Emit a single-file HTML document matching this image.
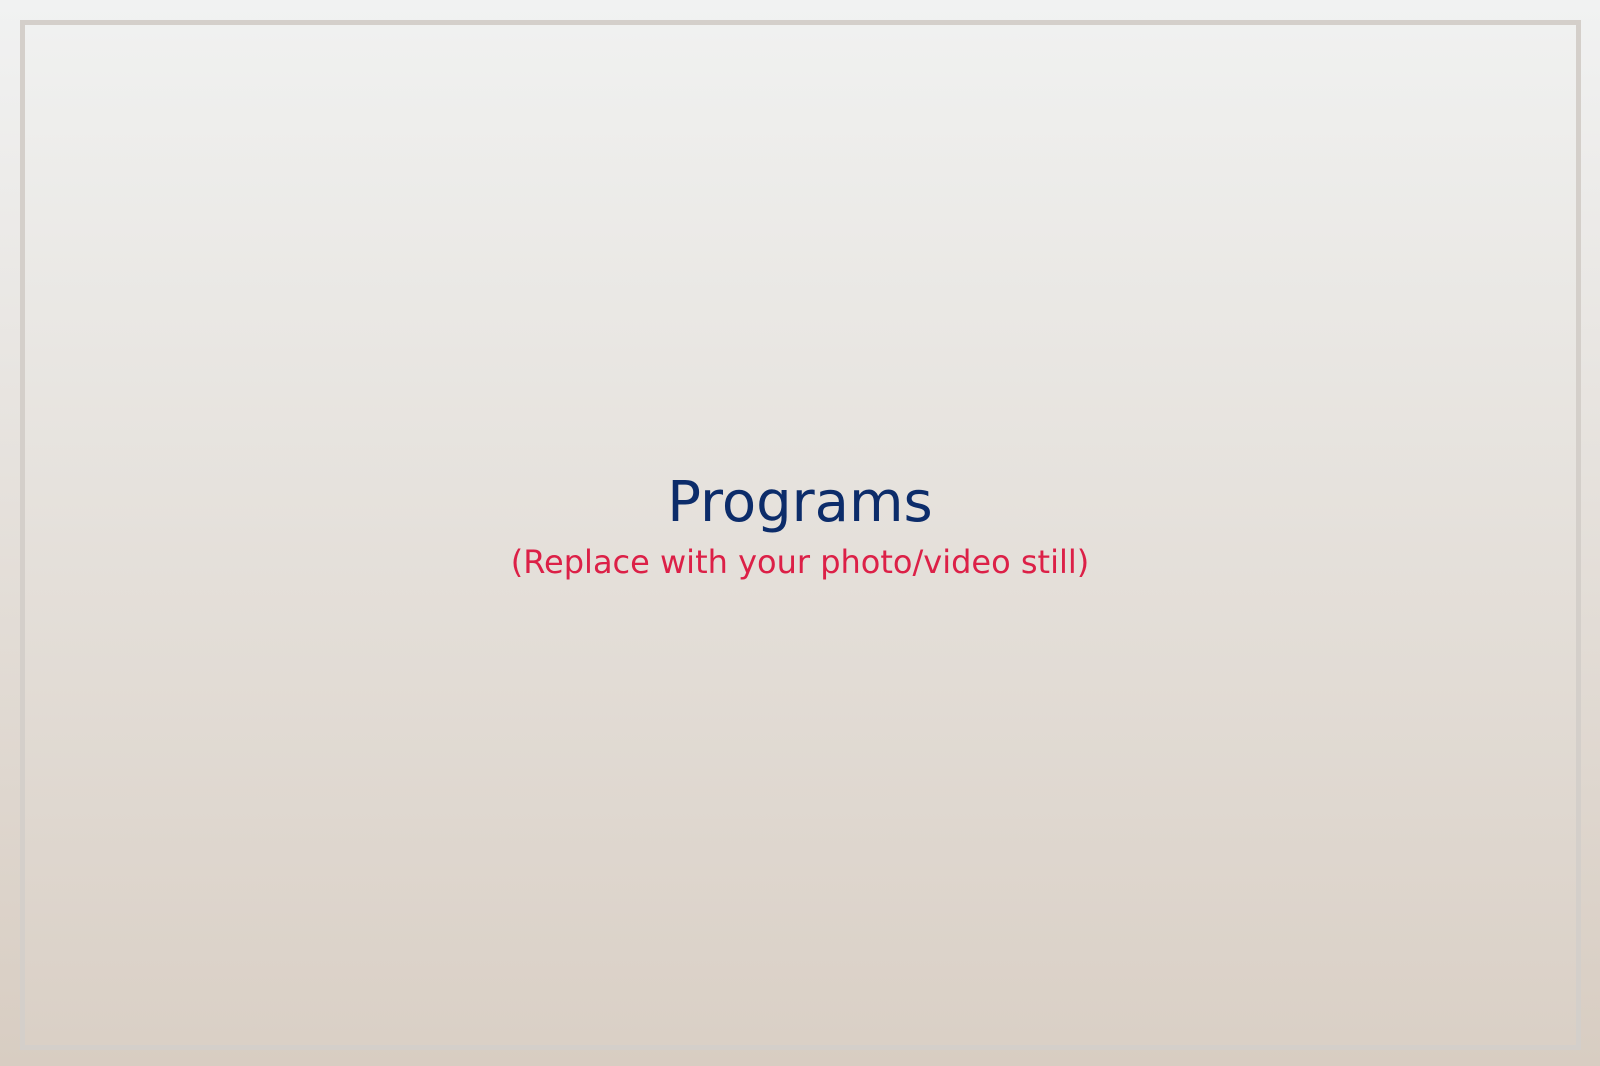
<!DOCTYPE html>
<html><head><meta charset="utf-8"><style>
html,body{margin:0;padding:0;width:1600px;height:1066px;overflow:hidden}
body{background:linear-gradient(#f1f2f2,#d8cdc2);position:relative;font-family:"DejaVu Sans","Liberation Sans",sans-serif}
.box{position:absolute;left:20px;top:20px;width:1561px;height:1030px;border:5px solid #d4cfca;box-sizing:border-box;background:linear-gradient(#f0f1f0,#dad0c6)}
.t{position:absolute;left:0;right:0;text-align:center;top:475px;font-size:56px;color:#0c2c6a;line-height:1}
.s{position:absolute;left:0;right:0;text-align:center;top:546px;font-size:32px;color:#dc2047;line-height:1}
</style></head><body>
<div class="box"></div>
<div class="t">Programs</div>
<div class="s">(Replace with your photo/video still)</div>
</body></html>
